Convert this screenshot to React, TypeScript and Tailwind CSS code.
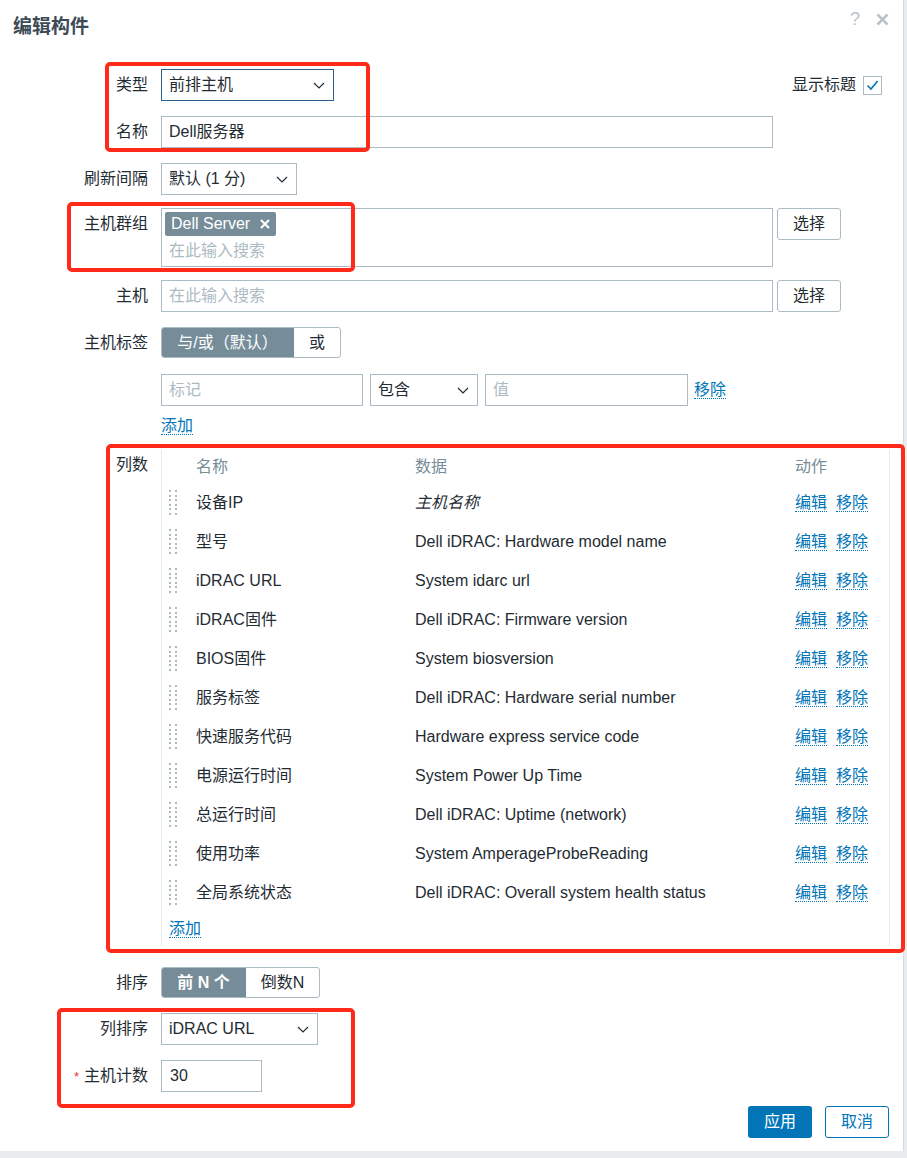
import React from "react"

const rows = [
  { name: "设备IP", data: "主机名称", italic: true },
  { name: "型号", data: "Dell iDRAC: Hardware model name" },
  { name: "iDRAC URL", data: "System idarc url" },
  { name: "iDRAC固件", data: "Dell iDRAC: Firmware version" },
  { name: "BIOS固件", data: "System biosversion" },
  { name: "服务标签", data: "Dell iDRAC: Hardware serial number" },
  { name: "快速服务代码", data: "Hardware express service code" },
  { name: "电源运行时间", data: "System Power Up Time" },
  { name: "总运行时间", data: "Dell iDRAC: Uptime (network)" },
  { name: "使用功率", data: "System AmperageProbeReading" },
  { name: "全局系统状态", data: "Dell iDRAC: Overall system health status" },
]

function Chevron() {
  return (
    <svg width="12" height="7" viewBox="0 0 12 7" fill="none">
      <path d="M1 1l5 5 5-5" stroke="#1f2c33" strokeWidth="1.2" />
    </svg>
  )
}

function Select({ value, w, focus }: { value: string; w: string; focus?: boolean }) {
  return (
    <div
      className={`${w} h-[32px] border ${focus ? "border-[#2d5f8e]" : "border-[#acbbc2]"} bg-white flex items-center justify-between pl-[7px] pr-[8px]`}
    >
      <span>{value}</span>
      <Chevron />
    </div>
  )
}

function Row({ label, mt, children, req }: { label: string; mt: string; children: React.ReactNode; req?: boolean }) {
  return (
    <div className={`flex items-start ${mt}`}>
      <div className="w-[148px] shrink-0 text-right leading-[32px]">
        {req && <span className="text-[#e33734] mr-[5px] text-[13px]">*</span>}
        {label}
      </div>
      <div className="ml-[13px] flex items-start flex-1">{children}</div>
    </div>
  )
}

function Link({ children }: { children: React.ReactNode }) {
  return <span className="text-[#0275b8] border-b border-dotted border-[#0275b8] leading-[17px]">{children}</span>
}

function Handle() {
  return (
    <div className="flex gap-[4px] pl-[7px]">
      {[0, 1].map((c) => (
        <div key={c} className="flex flex-col gap-[2.5px]">
          {[0, 1, 2, 3, 4, 5].map((r) => (
            <div key={r} className="w-[2px] h-[2px] bg-[#acbbc2]" />
          ))}
        </div>
      ))}
    </div>
  )
}

function RedBox({ cls }: { cls: string }) {
  return <div className={`absolute border-[4px] border-[#ff2a1a] rounded-[5px] pointer-events-none ${cls}`} />
}

export default function App() {
  return (
    <div className="relative w-[907px] h-[1158px] bg-[#e9ecee] text-[16px] text-[#1f2c33] font-['Liberation_Sans','Noto_Sans_CJK_SC',sans-serif]">
      <div className="w-[904px] h-[1151px] bg-white border-r border-[#d5dadd] flex flex-col">
        {/* header */}
        <div className="h-[68px] flex items-start justify-between pl-[13px] pr-[14px] pt-[13px]">
          <h1 className="text-[19px] font-bold leading-[28px] text-[#3d4b56]">编辑构件</h1>
          <div className="flex items-center gap-[16px] text-[#b8c4ca] -mt-[5px]">
            <span className="text-[18px] leading-[22px]">?</span>
            <svg width="13" height="13" viewBox="0 0 13 13">
              <path d="M1.5 1.5l10 10M11.5 1.5l-10 10" stroke="#b8c4ca" strokeWidth="2.6" />
            </svg>
          </div>
        </div>

        {/* type */}
        <Row label="类型" mt="mt-[1px]">
          <Select value="前排主机" w="w-[173px]" focus />
          <div className="ml-auto mr-[21px] flex items-center h-[32px]">
            <span>显示标题</span>
            <div className="ml-[7px] w-[19px] h-[19px] border border-[#acbbc2] flex items-center justify-center">
              <svg width="13" height="11" viewBox="0 0 13 11" fill="none">
                <path d="M1.5 5.5l3.5 3.5 6.5-8" stroke="#0275b8" strokeWidth="1.6" />
              </svg>
            </div>
          </div>
        </Row>

        <Row label="名称" mt="mt-[15px]">
          <div className="w-[612px] h-[32px] border border-[#acbbc2] pl-[7px] leading-[30px]">Dell服务器</div>
        </Row>

        <Row label="刷新间隔" mt="mt-[15px]">
          <Select value="默认 (1 分)" w="w-[136px]" />
        </Row>

        <Row label="主机群组" mt="mt-[13px]">
          <div className="w-[612px] h-[59px] border border-[#acbbc2] px-[3px] pt-[3px]">
            <div className="inline-flex items-center h-[24px] bg-[#768d99] text-white rounded-[2px] pl-[6px] pr-[6px]">
              <span className="leading-[24px]">Dell Server</span>
              <svg className="ml-[10px]" width="10" height="10" viewBox="0 0 10 10">
                <path d="M1 1l8 8M9 1l-8 8" stroke="#fff" strokeWidth="2.2" />
              </svg>
            </div>
            <div className="text-[#acbbc2] leading-[22px] pl-[4px] mt-[4px]">在此输入搜索</div>
          </div>
          <button className="ml-[4px] w-[64px] h-[32px] border border-[#acbbc2] rounded-[3px] bg-white">选择</button>
        </Row>

        <Row label="主机" mt="mt-[13px]">
          <div className="w-[612px] h-[32px] border border-[#acbbc2] pl-[7px] leading-[30px] text-[#acbbc2]">在此输入搜索</div>
          <button className="ml-[4px] w-[64px] h-[32px] border border-[#acbbc2] rounded-[3px] bg-white">选择</button>
        </Row>

        <Row label="主机标签" mt="mt-[15px]">
          <div className="flex h-[31px] rounded-[3px] overflow-hidden border border-[#acbbc2]">
            <div className="w-[133px] bg-[#768d99] text-white flex items-center justify-center -my-px -ml-px">与/或（默认）</div>
            <div className="w-[46px] flex items-center justify-center">或</div>
          </div>
        </Row>

        <div className="flex mt-[15px] ml-[161px] items-center">
          <div className="w-[202px] h-[32px] border border-[#acbbc2] pl-[7px] leading-[30px] text-[#acbbc2]">标记</div>
          <div className="ml-[7px]">
            <Select value="包含" w="w-[108px]" />
          </div>
          <div className="ml-[7px] w-[203px] h-[32px] border border-[#acbbc2] pl-[7px] leading-[30px] text-[#acbbc2]">值</div>
          <div className="ml-[6px]">
            <Link>移除</Link>
          </div>
        </div>
        <div className="ml-[161px] mt-[8px] h-[20px]">
          <Link>添加</Link>
        </div>

        {/* columns */}
        <Row label="列数" mt="mt-[15px]">
          <div className="w-[729px] border-l border-r border-[#e6eaec] mt-[1px]">
            <div className="grid grid-cols-[34px_219px_380px_1fr] h-[33px] items-center text-[#768d99]">
              <div />
              <div>名称</div>
              <div>数据</div>
              <div>动作</div>
            </div>
            {rows.map((r) => (
              <div key={r.name} className="grid grid-cols-[34px_219px_380px_1fr] h-[39px] items-center">
                <Handle />
                <div>{r.name}</div>
                <div className={r.italic ? "italic" : ""}>{r.data}</div>
                <div className="flex gap-[9px]">
                  <Link>编辑</Link>
                  <Link>移除</Link>
                </div>
              </div>
            ))}
            <div className="h-[34px] flex items-center pl-[7px]">
              <Link>添加</Link>
            </div>
          </div>
        </Row>

        <Row label="排序" mt="mt-[21px]">
          <div className="flex h-[31px] rounded-[3px] overflow-hidden border border-[#acbbc2]">
            <div className="w-[85px] bg-[#768d99] text-white font-bold flex items-center justify-center -my-px -ml-px">前 N 个</div>
            <div className="w-[73px] flex items-center justify-center">倒数N</div>
          </div>
        </Row>

        <Row label="列排序" mt="mt-[14px]">
          <Select value="iDRAC URL" w="w-[157px]" />
        </Row>

        <Row label="主机计数" mt="mt-[15px]" req>
          <div className="w-[101px] h-[32px] border border-[#acbbc2] pl-[8px] leading-[30px]">30</div>
        </Row>

        <div className="flex justify-end mt-[13px] pr-[14px] gap-[13px]">
          <button className="w-[64px] h-[32px] rounded-[3px] bg-[#0275b8] text-white">应用</button>
          <button className="w-[64px] h-[32px] rounded-[3px] border border-[#0275b8] text-[#0275b8] bg-white">取消</button>
        </div>
      </div>

      <RedBox cls="left-[105px] top-[62px] w-[265px] h-[90px]" />
      <RedBox cls="left-[67px] top-[202px] w-[288px] h-[70px]" />
      <RedBox cls="left-[106px] top-[444px] w-[799px] h-[509px]" />
      <RedBox cls="left-[57px] top-[1008px] w-[298px] h-[100px]" />
    </div>
  )
}
